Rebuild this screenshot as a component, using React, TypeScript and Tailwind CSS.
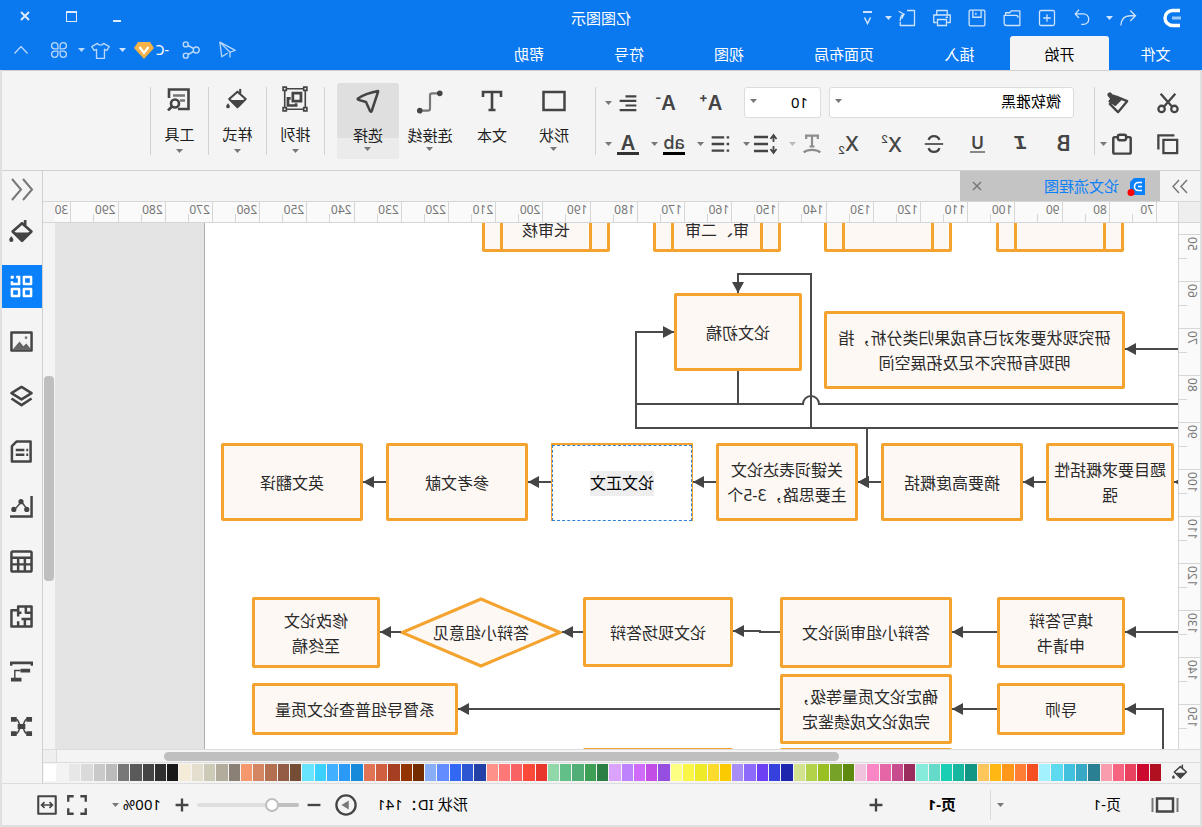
import { ReactNode, useState } from "react";
import clsx from "clsx";

type IconProps = {
  size?: number;
  sw?: number;
  className?: string;
  children: ReactNode;
};

const Icon = ({ size = 24, sw = 2, className, children }: IconProps) => (
  <svg
    width={size}
    height={size}
    viewBox="0 0 24 24"
    fill="none"
    stroke="currentColor"
    strokeWidth={sw}
    className={clsx("shrink-0", className)}
    aria-hidden="true"
  >
    {children}
  </svg>
);

const Caret = ({ className }: { className?: string }) => (
  <svg width="7" height="4" viewBox="0 0 7 4" className={clsx("shrink-0", className)} aria-hidden="true">
    <path d="M0 0h7L3.5 4z" fill="currentColor" />
  </svg>
);

const BucketShape = () => (
  <>
    <path d="M8.5 1v5" />
    <path d="M11.5 4 2.5 12l9 9 9-9z" strokeLinejoin="round" />
    <path d="M3 13h17l-8.5 8.500z" fill="currentColor" stroke="none" />
    <path d="M21.8 16.500c1.300 1.600 2 2.400 2 3.600a2 2 0 0 1-4 0c0-1.200.7-2 2-3.600z" fill="currentColor" stroke="none" />
  </>
);

const quickActions = [
  {
    label: "撤销",
    caret: true,
    width: "w-[46px]",
    shape: <path d="M9 2 2 9l7 7M2 9h7c8 0 12 4 12.500 13" />,
  },
  {
    label: "恢复",
    caret: false,
    width: "w-[35px]",
    shape: <path d="m16 1 5 5.500-5 5.500M21 6.500H10a7 7 0 0 0 0 14h3" />,
  },
  {
    label: "新建",
    caret: false,
    width: "w-[35px]",
    shape: (
      <>
        <rect x="2" y="2" width="20" height="20" rx="2" />
        <path d="M12 7v10M7 12h10" />
      </>
    ),
  },
  {
    label: "打开",
    caret: false,
    width: "w-[35px]",
    shape: <path d="M1.500 8V2.500H13L15 5h5.500v3.500M1.500 8v14h18c2 0 3-2 3-4V8.500h-16c-2 0-2.500 1-2.500 3" strokeLinejoin="round" />,
  },
  {
    label: "保存",
    caret: false,
    width: "w-[35px]",
    shape: (
      <>
        <rect x="1.500" y="1.500" width="21" height="21" rx="1.500" />
        <path d="M6.500 2v9h11V2M13.500 5v3" />
      </>
    ),
  },
  {
    label: "打印",
    caret: false,
    width: "w-[35px]",
    shape: (
      <>
        <path d="M5 7V2h14v5M5 18H1V8h22v10h-4" strokeLinejoin="round" />
        <path d="M6 14h12v8H6zM4 11h3" />
      </>
    ),
  },
  {
    label: "导出",
    caret: true,
    width: "w-[44px]",
    shape: <path d="M12 2H2v20h19v-5M23 3l-7 4 3 6M15 7c4 0 6 3 6 9" strokeLinejoin="round" />,
  },
];

const menuTabs = [
  { name: "文件", width: "w-[93px]" },
  { name: "开始", width: "w-[99px]" },
  { name: "插入", width: "w-[101px]" },
  { name: "页面布局", width: "w-[130px]" },
  { name: "视图", width: "w-[100px]" },
  { name: "符号", width: "w-[100px]" },
  { name: "帮助", width: "w-[100px]" },
];

const Header = () => (
  <header className="h-[70px] shrink-0 bg-[#0a78ee] text-white flex flex-col">
    <div className="h-9 shrink-0 grid grid-cols-[1fr_auto_1fr] items-center">
      <div className="flex items-center">
        <svg width="20" height="20" viewBox="0 0 20 20" className="ml-[20px] mr-[25px]" aria-hidden="true">
          <path d="M1 2.500h7.500a7.500 7.500 0 0 1 0 15H1" transform="matrix(1 0 0 1 1 0)" fill="none" stroke="#fff" strokeWidth="3.400" />
          <path d="M1 10h9" stroke="#9cc9f8" strokeWidth="3" />
        </svg>
        {quickActions.map((a) => (
          <button key={a.label} aria-label={a.label} className={clsx("flex items-center gap-1.5 text-[#cfe4fc]", a.width)}>
            <Icon size={18} sw={1.700}>{a.shape}</Icon>
            {a.caret && <Caret />}
          </button>
        ))}
        <button aria-label="自定义快速访问" className="text-[#cfe4fc]">
          <svg width="9" height="14" viewBox="0 0 9 14" fill="none" stroke="currentColor" aria-hidden="true">
            <path d="M0 1h9" strokeWidth="2" />
            <path d="m1.500 6.500 3 6 3-6" strokeWidth="1.500" />
          </svg>
        </button>
      </div>
      <h1 className="text-[15px] whitespace-nowrap">亿图图示</h1>
      <div className="flex items-center justify-end gap-[36px] pr-5 text-[#dcebfd]">
        <button aria-label="最小化">
          <svg width="8" height="10" aria-hidden="true"><path d="M0 8h8" stroke="currentColor" strokeWidth="2" /></svg>
        </button>
        <button aria-label="最大化" className="-mt-1">
          <svg width="11" height="11" fill="none" stroke="currentColor" aria-hidden="true">
            <rect x=".5" y=".5" width="10" height="10" />
            <path d="M0 1h11" strokeWidth="2" />
          </svg>
        </button>
        <button aria-label="关闭" className="-mt-1">
          <svg width="10" height="10" stroke="currentColor" strokeWidth="2" aria-hidden="true">
            <path d="m1 1 8 8M9 1 1 9" />
          </svg>
        </button>
      </div>
    </div>
    <div className="flex-1 flex justify-between">
      <nav className="flex">
        {menuTabs.map((t) => (
          <button
            key={t.name}
            className={clsx(
              "text-[15px] h-full pt-0.5 whitespace-nowrap",
              t.width,
              t.name === "开始" && "bg-[#f4f4f4] text-black rounded-t-[3px]"
            )}
          >
            {t.name}
          </button>
        ))}
      </nav>
      <div className="flex items-center pr-3.5 pb-1.5 text-[#b9d8fb]">
        <button aria-label="发送" className="w-9">
          <Icon size={18} sw={1.700}>
            <path d="M21.500 1.500 1 12.500l7 2.500 13.500-13.500L19 21l-8-5M8 15v7" strokeLinejoin="round" />
          </Icon>
        </button>
        <button aria-label="分享" className="w-[31px]">
          <Icon size={18} sw={1.900}>
            <circle cx="5" cy="12" r="4" />
            <circle cx="19" cy="4.500" r="3.300" />
            <circle cx="19" cy="19.500" r="3.300" />
            <path d="m8.500 10 7.500-4M8.500 14l7.500 4" />
          </Icon>
        </button>
        <button className="flex items-center gap-0.5 text-white text-[14px] leading-5 w-[53px] whitespace-nowrap">
          -C
          <svg width="20" height="17" viewBox="0 0 20 17" className="shrink-0" aria-hidden="true">
            <path d="M4 0h12l4 6-10 11L0 6z" fill="#f4b247" />
            <path d="m5.500 5 4.500 6 4.500-6" fill="none" stroke="#fff" strokeWidth="2.200" />
          </svg>
          <Caret className="ml-1.5 text-[#cfe4fc]" />
        </button>
        <button aria-label="主题" className="flex items-center gap-1.5 w-[44px] pl-1.5">
          <Icon size={19} sw={1.700}>
            <path d="M8 3 1 7l3 5 3-1.500V22h10V10.500l3 1.500 3-5-7-4c-1.500 3-6.500 3-8 0z" strokeLinejoin="round" />
          </Icon>
          <Caret />
        </button>
        <button aria-label="应用" className="w-11 pl-1">
          <Icon size={18} sw={1.700}>
            <path d="M10.500 10.500H6.200A4.200 4.200 0 1 1 10.500 6.200zM13.500 10.500h4.300a4.200 4.200 0 1 0-4.300-4.300zM10.500 13.500H6.200a4.200 4.200 0 1 0 4.300 4.300zM13.500 13.500h4.300a4.200 4.200 0 1 1-4.300 4.300z" />
          </Icon>
        </button>
        <button aria-label="收起功能区">
          <svg width="14" height="8" viewBox="0 0 14 8" fill="none" stroke="currentColor" strokeWidth="1.300" aria-hidden="true">
            <path d="m.5 7.500 6.500-7 6.500 7" />
          </svg>
        </button>
      </div>
    </div>
  </header>
);

const Separator = () => <div className="w-px h-[68px] mt-4 bg-[#d2d2d2] shrink-0" />;

const SplitButton = ({ label, muted, children }: { label: string; muted?: boolean; children: ReactNode }) => (
  <button
    aria-label={label}
    className={clsx("w-[46px] h-7 flex items-center gap-1 pl-[3px]", muted ? "text-[#8c8c8c]" : "text-[#444]")}
  >
    <span className="w-6 flex justify-center">{children}</span>
    <Caret className={muted ? "text-[#bbb]" : "text-[#777]"} />
  </button>
);

const BigTool = ({
  name,
  icon,
  active,
  caret = true,
  narrow,
}: {
  name: string;
  icon: ReactNode;
  active?: boolean;
  caret?: boolean;
  narrow?: boolean;
}) => (
  <button
    className={clsx(
      "mt-3 h-[76px] flex flex-col items-center text-[#444] shrink-0",
      narrow ? "w-[57px] pt-[3px]" : "w-[62px] pt-1.5",
      active && "rounded-[3px] bg-[linear-gradient(#dfdfdf_55px,#ebebeb_55px)]"
    )}
  >
    {icon}
    <span className="mt-3 text-[15px] leading-5 text-[#1c1c1c]">{name}</span>
    {caret && <Caret className={clsx("text-[#777]", narrow ? "mt-[5px]" : "mt-0.5")} />}
  </button>
);

const textStyles = [
  { label: "加粗", glyph: <span className="font-semibold text-[21px]">B</span> },
  { label: "斜体", glyph: <span className="font-['Liberation_Mono'] font-bold italic text-[21px]">I</span> },
  {
    label: "下划线",
    glyph: <span className="font-semibold text-[17px] leading-4 px-px border-b-2 border-[#888]">U</span>,
  },
  {
    label: "删除线",
    glyph: (
      <Icon size={20} sw={2.800}>
        <path d="M18.500 7C17.500 4 15 2.500 12 2.500S6.500 4 5.500 7M5.500 17c1 3 3.500 4.500 6.500 4.500s5.500-1.500 6.500-4.500" />
        <path d="M1 12h22" strokeWidth="2" />
      </Icon>
    ),
  },
  {
    label: "上标",
    glyph: (
      <span className="flex font-medium text-[20px] leading-6 pt-0.5">
        X<span className="text-[11px] leading-3">2</span>
      </span>
    ),
  },
  {
    label: "下标",
    glyph: (
      <span className="flex items-end font-medium text-[20px] leading-6">
        X<span className="text-[11px] leading-3">2</span>
      </span>
    ),
  },
];

const Ribbon = () => (
  <div className="h-[101px] shrink-0 flex border-y border-[#d0d0d0] bg-[#f4f4f4] text-[#444]">
    <div className="w-[105px] shrink-0 pt-4 flex flex-col gap-3 pl-[21px]">
      <div className="flex h-[31px] items-center gap-[28px]">
        <button aria-label="剪切">
          <Icon size={22} sw={2.500}>
            <circle cx="5" cy="18.500" r="3.500" />
            <circle cx="19" cy="18.500" r="3.500" />
            <path d="M4 2 16.500 16M20 2 7.500 16" />
          </Icon>
        </button>
        <button aria-label="格式刷">
          <Icon size={22} sw={2.500}>
            <path d="m2 10 12-5 7 8-9 9z" strokeLinejoin="round" />
            <path d="m9 8 8-4 4 6-6 4z" fill="currentColor" />
            <path d="m18.500 6 2.500-3" strokeWidth="5" strokeLinecap="round" />
          </Icon>
        </button>
      </div>
      <div className="flex h-7 items-center gap-[24px]">
        <button aria-label="复制">
          <Icon size={22} sw={2.500}>
            <path d="M2 7.500h15V22H2zM5 2.500h17.500V18" />
          </Icon>
        </button>
        <button aria-label="粘贴" className="flex items-center gap-1">
          <Icon size={22} sw={2.700}>
            <rect x="2.500" y="4.500" width="19" height="18" rx="1.500" />
            <rect x="7.500" y="1.800" width="9" height="6" rx="2" fill="#f4f4f4" />
          </Icon>
          <Caret className="text-[#777]" />
        </button>
      </div>
    </div>
    <Separator />
    <div className="w-[498px] shrink-0 pt-4 flex flex-col gap-3 font-['Inter','Noto_Sans_CJK_SC',sans-serif]">
      <div className="flex h-[31px] items-center pl-5">
        <label className="relative w-[245px] mr-2">
          <select
            aria-label="字体"
            className="appearance-none w-full h-[31px] pl-3 text-[15px] text-black bg-white border border-[#dcdcdc] rounded-[3px]"
          >
            <option>微软雅黑</option>
          </select>
          <Caret className="absolute right-1.5 top-3 text-[#777]" />
        </label>
        <label className="relative w-[77px] mr-[11px]">
          <select
            aria-label="字号"
            className="appearance-none w-full h-[31px] pl-3 font-['Noto_Sans',sans-serif] text-[15px] text-black bg-white border border-[#dcdcdc] rounded-[3px]"
          >
            <option>10</option>
          </select>
          <Caret className="absolute right-1.5 top-3 text-[#777]" />
        </label>
        <button aria-label="增大字号" className="w-[45px] flex justify-center">
          <span className="font-semibold text-[20px] leading-7">A</span>
          <span className="font-bold text-[13px] leading-4">+</span>
        </button>
        <button aria-label="减小字号" className="w-[45px] flex justify-center">
          <span className="font-semibold text-[20px] leading-7">A</span>
          <span className="font-bold text-[13px] leading-4">-</span>
        </button>
        <SplitButton label="对齐">
          <Icon size={20} sw={2.600}>
            <path d="M2 4h13M2 9.500h20M2 15h13M2 20.500h20" />
          </Icon>
        </SplitButton>
      </div>
      <div className="flex h-7 items-center pl-[9px]">
        {textStyles.map((s) => (
          <button key={s.label} aria-label={s.label} className="w-[43px] h-7 flex items-center justify-center">
            {s.glyph}
          </button>
        ))}
        <SplitButton label="文字方向" muted>
          <Icon size={20} sw={2.600}>
            <path d="M5 6V2h14v4M12 2v13M9 15h6" />
            <path d="M2 22c5-4 15-4 20 0" />
          </Icon>
        </SplitButton>
        <SplitButton label="行距">
          <Icon size={24} sw={2.400}>
            <path d="M10 5h14M10 12h14M10 19h14" />
            <path d="m1.500 7 3-4 3 4M4.500 4v6M4.500 14v6M1.500 17l3 4 3-4" strokeWidth="1.800" />
          </Icon>
        </SplitButton>
        <SplitButton label="项目符号">
          <Icon size={20} sw={2.800}>
            <path d="M7 4h15M7 12h15M7 20h15M1 4h3M1 12h3M1 20h3" />
          </Icon>
        </SplitButton>
        <SplitButton label="高亮">
          <span className="font-medium text-[18px] leading-[18px] w-[22px] border-b-[3px] border-black">ab</span>
        </SplitButton>
        <SplitButton label="字体颜色">
          <span className="font-semibold text-[20px] leading-[18px] w-[22px] border-b-[3px] border-[#333]">A</span>
        </SplitButton>
      </div>
    </div>
    <Separator />
    <div className="flex pl-2.5">
      <BigTool
        name="形状"
        icon={<Icon sw={2.500}><rect x="1.500" y="3" width="21" height="18" /></Icon>}
      />
      <BigTool
        name="文本"
        caret={false}
        icon={
          <Icon sw={2.600}>
            <path d="M3 8V3h18v5M12 3v18M8.500 21h7" />
          </Icon>
        }
      />
      <BigTool
        name="连接线"
        icon={
          <Icon size={26} className="-mb-0.5">
            <path d="M3 4h7q2 0 2 2v12q0 2 2 2h7" stroke="#777" />
            <circle cx="3" cy="4" r="2.600" fill="currentColor" stroke="none" />
            <circle cx="21.500" cy="20" r="2.600" fill="currentColor" stroke="none" />
          </Icon>
        }
      />
      <BigTool
        name="选择"
        active
        icon={
          <Icon sw={2.500}>
            <path d="M2 2c5 1 15 4 20 7.500.5.500.4 1-.5 1.400L14 13l-4 9c-.5 1-1.300 1-1.700 0L2 3z" strokeLinejoin="round" />
          </Icon>
        }
      />
    </div>
    <div className="w-3 shrink-0" />
    <Separator />
    <BigTool
      name="排列"
      narrow
      icon={
        <Icon size={26} sw={1.500}>
          <path d="M2.500 2.500h19v19h-19z" />
          <path d="M6.500 6.500h7.500v7.500H6.500z" strokeWidth="2.500" />
          <path d="M16 11.500h2.500v6.500H11V16" strokeWidth="2.500" />
          <path d="M1 1h3v3H1zM20 1h3v3h-3zM1 20h3v3H1zM20 20h3v3h-3z" fill="#f4f4f4" />
        </Icon>
      }
    />
    <Separator />
    <BigTool name="样式" narrow icon={<Icon size={26} sw={2.300} className="p-0.5"><BucketShape /></Icon>} />
    <Separator />
    <BigTool
      name="工具"
      narrow
      icon={
        <Icon size={26} sw={2.600} className="p-px">
          <path d="M13 22H2.500V2.500H22V11" />
          <path d="M6 8.500h12M6 13.500h5" stroke="#777" />
          <circle cx="16" cy="16.500" r="4" />
          <path d="m19 19.500 4 4" />
        </Icon>
      }
    />
    <Separator />
  </div>
);

const DocumentTabs = () => (
  <div className="h-[30px] shrink-0 flex bg-[#f4f4f4]">
    <button aria-label="展开符号库" className="w-10 flex items-center justify-center text-[#777]">
      <svg width="16" height="15" viewBox="0 0 16 15" fill="none" stroke="currentColor" strokeWidth="1.500" aria-hidden="true">
        <path d="m1 1 6 6.500-6 6.500M9 1l6 6.500-6 6.500" />
      </svg>
    </button>
    <div className="w-[200px] bg-[#c4c4c4] flex items-center pl-[15px] pr-3">
      <svg width="18" height="19" viewBox="0 0 18 19" aria-hidden="true">
        <path d="M0 1h11l4 4v13H0z" fill="#0a80fb" />
        <path d="M3 5.500h3.500a3.500 3.500 0 0 1 0 8H3M3 9.500h4" fill="none" stroke="#fff" strokeWidth="1.600" />
        <circle cx="14" cy="15.500" r="3.500" fill="red" />
      </svg>
      <span className="ml-2 text-[15px] text-[#0a80fb]">论文流程图</span>
      <button aria-label="关闭标签" className="ml-auto text-[#777]">
        <svg width="10" height="10" stroke="currentColor" strokeWidth="1.500" aria-hidden="true">
          <path d="m1 1 8 8M9 1 1 9" />
        </svg>
      </button>
    </div>
  </div>
);

const hTicks = Array.from({ length: 24 }, (_, i) => 70 + i * 10);
const vTicks = Array.from({ length: 11 }, (_, i) => 50 + i * 10);

const HorizontalRuler = () => (
  <div className="h-[22px] shrink-0 flex border-y border-[#d6d6d6] bg-[#f4f4f4]">
    <div className="w-[22px] shrink-0 bg-[#eee] border-r border-[#d6d6d6]" />
    <div className="flex-1 overflow-hidden bg-[#fafafa]">
      <div className="flex h-full w-[1154px] pl-[21px]">
        {hTicks.map((n) => (
          <div key={n} className="flex-1 min-w-0 relative border-l border-[#d6d6d6] pl-0.5 text-[12px] leading-4 text-[#777]">
            {n}
            <span className="absolute left-1/2 bottom-0 w-px h-2 bg-[#d6d6d6]" />
          </div>
        ))}
      </div>
    </div>
    <div className="w-3 shrink-0" />
  </div>
);

const VerticalRuler = () => (
  <div className="w-[22px] shrink-0 overflow-hidden bg-[#fafafa] border-r border-[#d6d6d6]">
    <div className="flex flex-col h-[530px] pt-[11px]">
      {vTicks.map((n) => (
        <div key={n} className="h-[47px] shrink-0 relative border-t border-[#d6d6d6] text-[12px] leading-4 text-[#777]">
          <span className="block w-4 pb-0.5 [writing-mode:vertical-rl] rotate-180">{n}</span>
          <span className="absolute right-0 top-1/2 h-px w-2 bg-[#d6d6d6]" />
        </div>
      ))}
    </div>
  </div>
);

type Node = {
  x: number;
  y: number;
  w: number;
  h: number;
  lines: string[];
  kind?: "sub" | "diamond" | "editing";
};

const nodes: Node[] = [
  { x: 54, y: -47, w: 128, h: 76, lines: ["导师主题"], kind: "sub" },
  { x: 226, y: -47, w: 128, h: 76, lines: ["小组讨论"], kind: "sub" },
  { x: 397, y: -17, w: 128, h: 46, lines: ["审、二审"], kind: "sub" },
  { x: 568, y: -17, w: 128, h: 46, lines: ["长审核"], kind: "sub" },
  { x: 53, y: 88, w: 301, h: 78, lines: ["研究现状要求对已有成果归类分析，指", "明现有研究不足及拓展空间"] },
  { x: 376, y: 70, w: 128, h: 78, lines: ["论文初稿"] },
  { x: 4, y: 220, w: 128, h: 78, lines: ["题目要求概括性", "强"] },
  { x: 155, y: 220, w: 142, h: 78, lines: ["摘要高度概括"] },
  { x: 320, y: 220, w: 142, h: 78, lines: ["关键词表达论文", "主要思路，3-5个"] },
  { x: 485, y: 220, w: 142, h: 78, lines: ["论文正文"], kind: "editing" },
  { x: 650, y: 220, w: 142, h: 78, lines: ["参考文献"] },
  { x: 815, y: 220, w: 142, h: 78, lines: ["英文翻译"] },
  { x: 53, y: 374, w: 128, h: 71, lines: ["填写答辩", "申请书"] },
  { x: 226, y: 374, w: 172, h: 71, lines: ["答辩小组审阅论文"] },
  { x: 445, y: 374, w: 150, h: 70, lines: ["论文现场答辩"] },
  { x: 616, y: 374, w: 162, h: 71, lines: ["答辩小组意见"], kind: "diamond" },
  { x: 798, y: 374, w: 128, h: 71, lines: ["修改论文", "至终稿"] },
  { x: 53, y: 460, w: 128, h: 52, lines: ["导师"] },
  { x: 226, y: 451, w: 172, h: 70, lines: ["确定论文质量等级，", "完成论文成绩鉴定"] },
  { x: 720, y: 460, w: 206, h: 52, lines: ["系督导组普查论文质量"] },
  { x: 226, y: 525, w: 172, h: 70, lines: [] },
  { x: 445, y: 525, w: 150, h: 70, lines: [] },
];

const arrows = [
  "M0 126H53",
  "M0 259H4",
  "M132 259H155",
  "M297 259H320",
  "M462 259H485",
  "M627 259H650",
  "M792 259H815",
  "M0 409H53",
  "M181 409H226",
  "M398 409H418V408H445",
  "M595 409H616",
  "M777 409H798",
  "M15 540V486H53",
  "M181 486H226",
  "M398 486H720",
  "M0 205H542V109H504",
  "M367 205V51H440V70",
  "M367 205H311V259H320",
];

const lines = ["M0 181H359a8 8 0 0 1 16 0H440V148", "M440 181H542"];

const FlowNode = ({ node }: { node: Node }) => {
  const box = { left: node.x, top: node.y, width: node.w, height: node.h };
  const editing = node.kind === "editing";
  return (
    <div
      className={clsx(
        "absolute flex flex-col items-center justify-center text-[16px] leading-[25px] whitespace-nowrap",
        node.kind !== "diamond" && !editing && "border-[3px] border-[#f4a32f] bg-[#fef8f4] rounded-[2px]",
        editing ? "bg-white border-t-2 border-x border-[#f4a32f] text-black" : "pt-0.5 text-[#2a2a2a]"
      )}
      style={box}
    >
      {node.kind === "sub" && <div className="absolute inset-y-0 inset-x-[15px] border-x-[3px] border-[#f4a32f]" />}
      {node.kind === "diamond" && (
        <svg className="absolute inset-0" width="162" height="71" aria-hidden="true">
          <path d="M2 35.500 81 2l79 33.500L81 69z" fill="#fef8f4" stroke="#f4a32f" strokeWidth="3" />
        </svg>
      )}
      {editing && <div className="absolute inset-0 border border-dashed border-[#2f80d8]" />}
      {node.lines.map((l) => (
        <span key={l} className={clsx("relative", editing && "bg-[#eee]")}>
          {l}
        </span>
      ))}
    </div>
  );
};

const Canvas = () => (
  <div className="flex-1 min-w-0 overflow-hidden bg-[#e4e4e4]">
    <div className="relative w-[974px] h-full min-h-[526px] bg-white border-r border-[#aeaeae] overflow-hidden">
      {nodes.map((n) => (
        <FlowNode key={`${n.x}-${n.y}`} node={n} />
      ))}
      <svg className="absolute inset-0 w-full h-full" fill="none" stroke="#4a4a4a" strokeWidth="2" aria-hidden="true">
        <defs>
          <marker id="arrow" markerUnits="userSpaceOnUse" markerWidth="11" markerHeight="12" refX="11" refY="6" orient="auto">
            <path d="M0 0 11 6 0 12z" fill="#444" stroke="none" />
          </marker>
        </defs>
        {lines.map((d) => (
          <path key={d} d={d} />
        ))}
        {arrows.map((d) => (
          <path key={d} d={d} markerEnd="url(#arrow)" />
        ))}
      </svg>
    </div>
  </div>
);

const swatches = [
  "#b0101f", "#cc0a30", "#e8425f", "#f76482", "#f99cae",
  "#2a7f92", "#38a9c4", "#42c1de", "#5ddaf0", "#a3f1ff",
  "#f45022", "#ff7e36", "#ff981a", "#ffb813", "#ffc65c",
  "#109682", "#17b69f", "#19ceb2", "#65dac8", "#85ecdc",
  "#9a2c5e", "#c64c8e", "#e466a6", "#fb86c6", "#f1c2de",
  "#5f8a10", "#76a228", "#9abf22", "#b2d24a", "#d2e28e",
  "#1e26ae", "#3640dc", "#6e40f4", "#8e6afa", "#a98ef8",
  "#fcca00", "#fbdb2c", "#eeea28", "#faf648", "#fcff82",
  "#964ee0", "#c24ee6", "#d06cfa", "#be82fc", "#dba2fe",
  "#2c7f44", "#3c9f54", "#50ae76", "#62bf88", "#90d8aa",
  "#e8362c", "#fc4a3a", "#f86262", "#ff7878", "#ff9288",
  "#2340a6", "#2c56d2", "#3268f4", "#628cff", "#88aef8",
  "#722c00", "#933400", "#a63f22", "#d05e40", "#e07356",
  "#188ada", "#2a9af6", "#42b0ff", "#3cd0fe", "#68e4ff",
  "#754c34", "#945c44", "#b27050", "#d48662", "#f6986e",
  "#8a8076", "#b2ac9c", "#cecab8", "#e4dece", "#f4ecd8",
  "#191919", "#2f2f2f", "#444444", "#5a5a5a", "#787878",
  "#bbbbbb", "#c9c9c9", "#dadada", "#e7e7e7", "#f3f3f3", "#ffffff",
];

const Palette = () => (
  <div className="h-5 shrink-0 flex items-start pt-px bg-[#f4f4f4] pr-px">
    <button aria-label="填充颜色" className="w-[39px] shrink-0 flex justify-center text-[#444]">
      <Icon size={16} sw={2.300}><BucketShape /></Icon>
    </button>
    <div className="flex-1 flex gap-px h-[17px]">
      {swatches.map((c) => (
        <button key={c} aria-label={c} className="flex-1" style={{ backgroundColor: c }} />
      ))}
    </div>
  </div>
);

const panels = [
  { name: "样式", shape: <BucketShape /> },
  {
    name: "符号",
    shape: (
      <>
        <path d="M2 2h7.500v7.500H2zM2 14.500h7.500V22H2zM14.500 14.500H22V22h-7.500z" strokeLinejoin="round" />
        <path d="M17.500 2h-3v7.500H22v-3M20 2h3M22 1v3" />
      </>
    ),
  },
  {
    name: "图片",
    shape: (
      <>
        <path d="M1.500 2.500h21v19h-21z" strokeLinejoin="round" />
        <path d="m2 20 5-6 3 3 4-5 7 8z" fill="#666" stroke="none" />
        <path d="M6 8h2.500" stroke="#777" />
      </>
    ),
  },
  {
    name: "图层",
    shape: <path d="m12 2 10.500 6.500L12 15 1.500 8.500zM1.500 14 12 21l10.500-7" strokeLinejoin="round" />,
  },
  {
    name: "页面",
    shape: (
      <>
        <path d="M2.500 1.500H17l5 5v16H2.500z" strokeLinejoin="round" />
        <path d="M5 10.500h2M9 10.500h9M5 15.500h2M9 15.500h9" />
      </>
    ),
  },
  {
    name: "图表",
    shape: (
      <>
        <path d="M1.500 1v21.500H24" />
        <path d="m6 15 6-8 7 8" strokeWidth="1.500" />
        <g fill="currentColor" stroke="none">
          <circle cx="6.500" cy="15" r="2.700" />
          <circle cx="12.500" cy="7" r="2.700" />
          <circle cx="20" cy="15" r="2.700" />
        </g>
      </>
    ),
  },
  {
    name: "表格",
    shape: (
      <>
        <rect x="1.500" y="1.500" width="21" height="21" rx="1.500" />
        <path d="M2 8h20M2 15h20M8.500 8v14M15.500 8v14" />
      </>
    ),
  },
  {
    name: "平面图",
    shape: (
      <path d="M1.500 1.500h14v4h7v17h-21zM1.500 8h6V2M1.500 14.500h7v8M15.500 5v7M15.500 17v5M8 14.500h4M12 8h3.500" strokeLinejoin="round" />
    ),
  },
  {
    name: "甘特图",
    shape: (
      <>
        <path d="M1 6V3h22v3" strokeWidth="3" />
        <path d="M3 11h10M12 20.500h11" strokeWidth="4" />
        <path d="M13 11h6v8" strokeWidth="1.500" />
      </>
    ),
  },
  {
    name: "思维导图",
    shape: (
      <>
        <path d="M1 4.500h6M17 4.500h6M1 19.500h6M17 19.500h6M8 12h8" strokeWidth="5" />
        <path d="M6 4.500c4 0 3 7.500 6 7.500s2 7.500 6 7.500M18 4.500c-4 0-3 7.500-6 7.500s-2 7.500-6 7.500" strokeWidth="1.500" />
      </>
    ),
  },
];

const PanelBar = () => {
  const [open, setOpen] = useState("符号");
  return (
    <aside className="w-[41px] shrink-0 border-l border-[#d0d0d0] bg-[#f4f4f4] overflow-hidden">
      <button aria-label="展开面板" className="w-full h-9 flex items-center justify-center text-[#777]">
        <svg width="24" height="23" viewBox="0 0 24 23" fill="none" stroke="currentColor" strokeWidth="2" aria-hidden="true">
          <path d="M11 1 2 11.500 11 22M22 1l-9 10.500L22 22" />
        </svg>
      </button>
      <nav className="flex flex-col gap-3 pt-[3px]">
        {panels.map((p) => (
          <button
            key={p.name}
            aria-label={p.name}
            onClick={() => setOpen(p.name)}
            className={clsx(
              "h-[43px] flex items-center justify-center",
              open === p.name ? "bg-[#0a80fb] text-white" : "text-[#444]"
            )}
          >
            <Icon size={p.name === "样式" ? 25 : 23} sw={2.600}>{p.shape}</Icon>
          </button>
        ))}
      </nav>
    </aside>
  );
};

const StatusBar = () => {
  const [zoom, setZoom] = useState(23);
  return (
    <footer className="h-[42px] shrink-0 flex items-center border-t border-[#dcdcdc] bg-[#f4f4f4] text-[15px] text-black">
      <button aria-label="页面视图" className="ml-[21px] text-[#444]">
        <svg width="28" height="16" viewBox="0 0 28 16" fill="none" stroke="currentColor" aria-hidden="true">
          <path d="M1.500 1v14M26.500 1v14" stroke="#777" strokeWidth="2" />
          <rect x="6" y="1.500" width="16" height="13" strokeWidth="2.500" />
        </svg>
      </button>
      <label className="relative ml-7 w-[132px]">
        <select aria-label="当前页" className="appearance-none w-full h-7 pl-0.5">
          <option>页-1</option>
        </select>
        <Caret className="absolute right-1.5 top-3 text-[#777]" />
      </label>
      <div className="w-px h-[30px] bg-[#dcdcdc]" />
      <button className="ml-[34px] font-bold w-[73px] text-left">页-1</button>
      <button aria-label="添加页面" className="text-[#444]">
        <Icon size={14} sw={4}><path d="M12 1v22M1 12h22" /></Icon>
      </button>
      <span className="ml-auto mr-[20px]">形状 ID：141</span>
      <div className="flex items-center text-[#444] pr-[35px]">
        <button aria-label="播放" className="mr-[14px]">
          <Icon size={22} sw={2.500}>
            <circle cx="12" cy="12" r="10.500" />
            <path d="m9 7 8 5-8 5z" fill="#777" stroke="none" />
          </Icon>
        </button>
        <button aria-label="缩小" className="mr-2">
          <Icon size={14} sw={4}><path d="M1 12h22" /></Icon>
        </button>
        <input
          type="range"
          aria-label="缩放"
          value={zoom}
          onChange={(e) => setZoom(Number(e.target.value))}
          className="appearance-none w-[102px] h-1 rounded-full bg-[linear-gradient(to_right,#bfbfbf_27%,#dedede_27%)] [&::-webkit-slider-thumb]:appearance-none [&::-webkit-slider-thumb]:size-3.5 [&::-webkit-slider-thumb]:rounded-full [&::-webkit-slider-thumb]:border-2 [&::-webkit-slider-thumb]:border-[#bfbfbf] [&::-webkit-slider-thumb]:bg-white"
        />
        <button aria-label="放大" className="ml-2 mr-3.5">
          <Icon size={14} sw={4}><path d="M12 1v22M1 12h22" /></Icon>
        </button>
        <button className="flex items-center gap-1 text-black w-[74px]">
          100%
          <Caret className="text-[#777]" />
        </button>
        <button aria-label="全屏" className="mr-2.5">
          <Icon size={20} sw={2.800}>
            <path d="M1.500 8V1.500H8M16 1.500h6.500V8M22.500 16v6.500H16M8 22.500H1.500V16" />
          </Icon>
        </button>
        <button aria-label="适合宽度">
          <Icon size={20} sw={2.500}>
            <path d="M1.500 1.500h21v21h-21z" strokeLinejoin="round" />
            <path d="M6 12h12M9 8.500 5.500 12 9 15.500M15 8.500l3.500 3.500-3.500 3.500" strokeWidth="2" />
          </Icon>
        </button>
      </div>
    </footer>
  );
};

const App = () => (
  <div className="h-screen flex flex-col overflow-hidden -scale-x-100 bg-[#f4f4f4] font-['Noto_Sans','Noto_Sans_CJK_SC',sans-serif]">
    <Header />
    <div className="flex-1 min-h-0 flex flex-col border-x-2 border-b-2 border-[#e0e0e0]">
      <Ribbon />
      <div className="flex-1 min-h-0 flex">
        <main className="flex-1 min-w-0 flex flex-col">
          <DocumentTabs />
          <HorizontalRuler />
          <div className="flex-1 min-h-0 flex">
            <VerticalRuler />
            <Canvas />
            <div className="w-3 shrink-0 bg-[#f4f4f4] pl-px">
              <div className="h-[29%]" />
              <div className="w-2.5 h-[39%] rounded-[4px] bg-[#bfbfbf]" />
            </div>
          </div>
          <div className="h-3.5 shrink-0 flex border-y border-[#dcdcdc] bg-[#f4f4f4]">
            <div className="flex-1 flex items-center border-r border-[#dcdcdc]">
              <div className="ml-[31.6%] w-[59%] h-[9px] rounded-full bg-[#bfbfbf]" />
            </div>
            <div className="w-[13px] bg-[#efefef]" />
          </div>
          <Palette />
        </main>
        <PanelBar />
      </div>
      <StatusBar />
    </div>
  </div>
);

export default App;
